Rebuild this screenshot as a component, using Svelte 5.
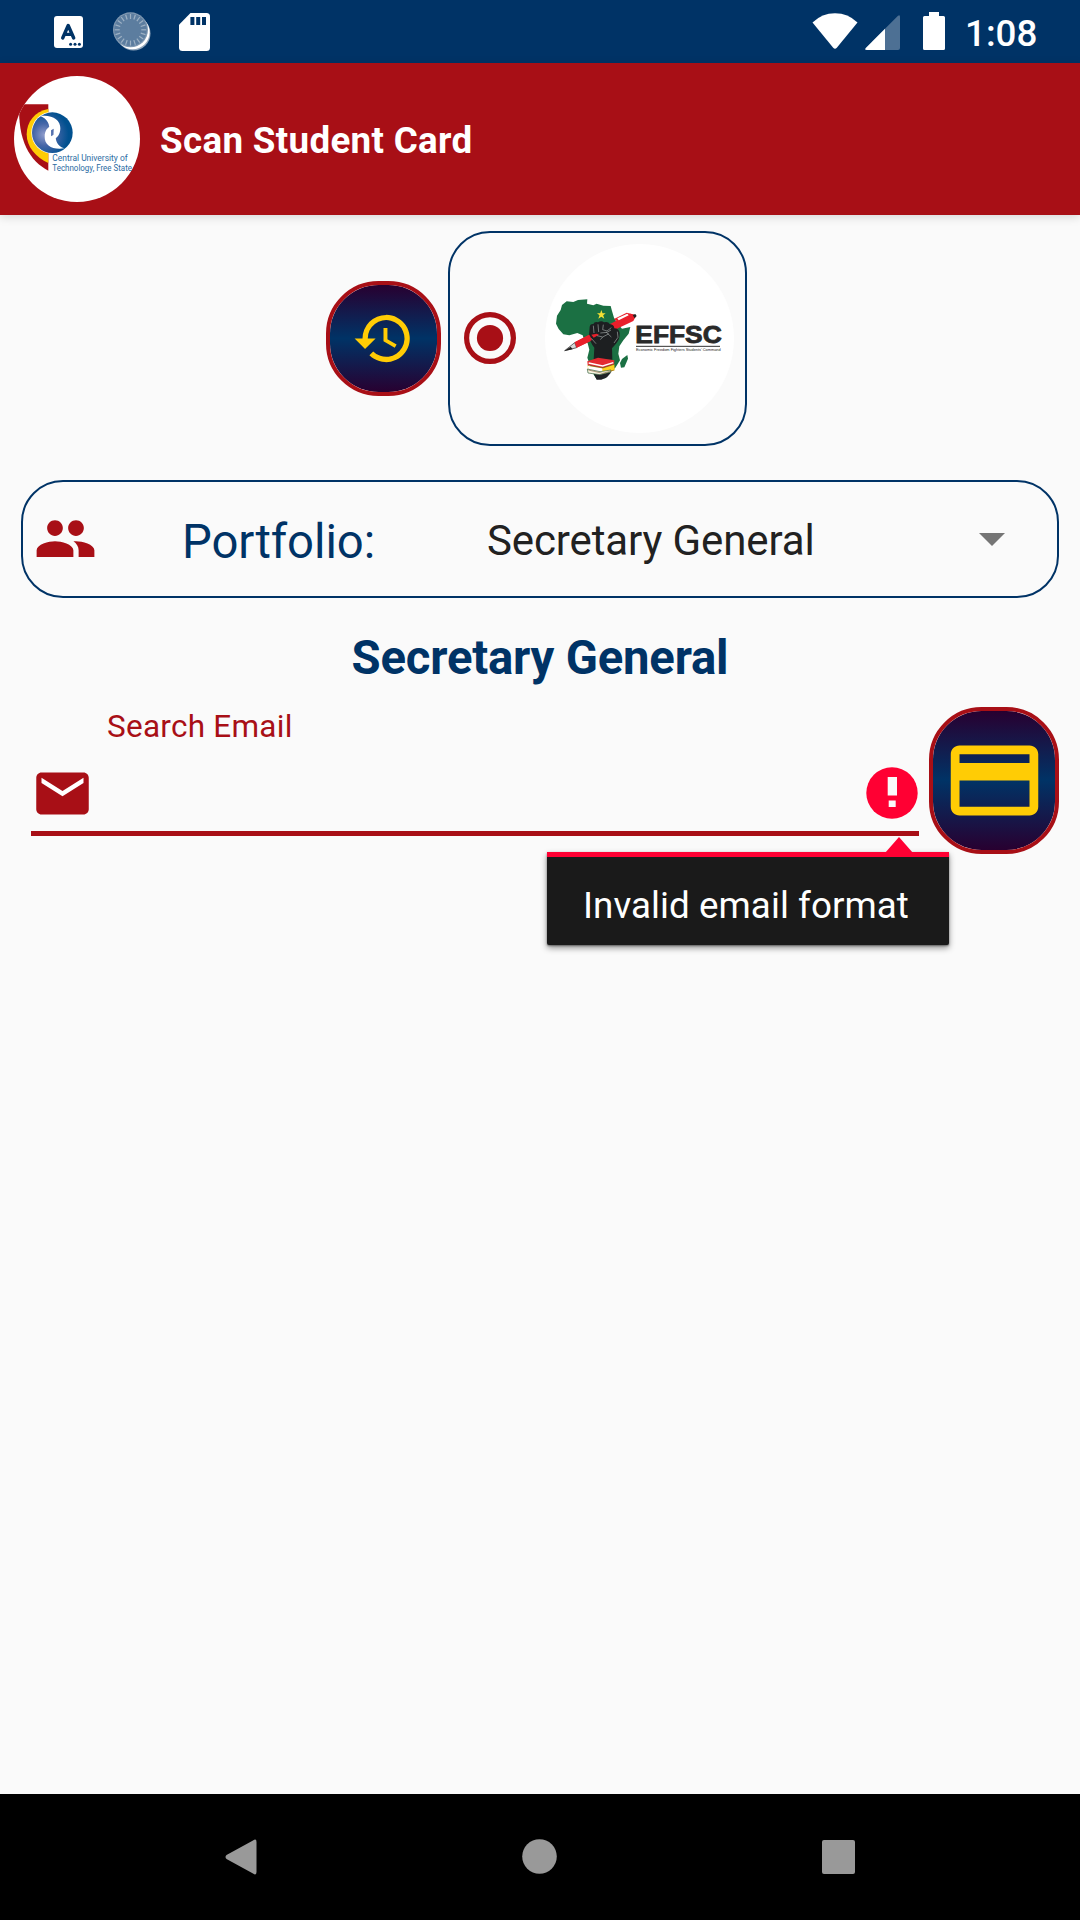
<script>
  let portfolio = $state('Secretary General');
  const spokes = Array.from({ length: 20 }, (_, i) => i * 18);
</script>

<div class="screen">
  <div class="status">
    <svg class="i-lang" width="29" height="32" viewBox="0 0 29 32">
      <rect width="29" height="32" rx="3" fill="#fff" />
      <path d="M8.7 22 14.2 9.5 19.7 22M10.8 18.4H17.6" fill="none" stroke="#003366" stroke-width="3.4" stroke-linecap="round" stroke-linejoin="round" />
      <g fill="#003366"><circle cx="16.6" cy="28.3" r="1.5" /><circle cx="21" cy="28.3" r="1.5" /><circle cx="25.4" cy="28.3" r="1.5" /></g>
    </svg>
    <svg class="i-sync" width="38" height="40" viewBox="0 0 38 40">
      <circle cx="20.5" cy="21.5" r="17" fill="#8fa5bb" />
      <circle cx="19.6" cy="20.3" r="17" fill="#fff" />
      <circle cx="17.5" cy="17.8" r="17.5" fill="#8099b2" />
      <circle cx="17.5" cy="17.8" r="16.3" fill="#5c7d9f" />
      {#each spokes as a}
        <path d="M17.5 2V7" stroke="#9db1c4" stroke-width="1.2" transform="rotate({a} 17.5 17.8)" />
      {/each}
    </svg>
    <svg class="i-sd" width="31" height="38" viewBox="0 0 31 38">
      <path d="M11.5 0H27.5Q31 0 31 3.5V34.5Q31 38 27.5 38H3.5Q0 38 0 34.5V11.8Z" fill="#fff" />
      <path d="M11.4 4h4v8h-4zM17.2 4h4v8h-4zM23 4h4v8h-4z" fill="#003366" />
    </svg>
    <div class="right">
      <svg class="i-wifi" width="46" height="37" viewBox="0 0 46 37">
        <path d="M.5 9.4Q10 .2 23 .2T45.500 9.400L24.800 34.800Q23 36.800 21.200 34.800Z" fill="#fff" />
      </svg>
      <svg class="i-cell" width="35" height="35" viewBox="0 0 35 35">
        <path d="M33 .8Q35-.8 35 2V33Q35 35 33 35H2Q-.8 35 .8 33Z" fill="#fff" fill-opacity=".3" />
        <path d="M20 13.800V35H2Q-.8 35 .8 33Z" fill="#fff" />
      </svg>
      <svg class="i-batt" width="22" height="38" viewBox="0 0 22 38">
        <path d="M6 0h10v4h4.500q1.500 0 1.500 1.500v31q0 1.500-1.500 1.500h-19q-1.500 0-1.500-1.500v-31q0-1.500 1.500-1.500h4.500z" fill="#fff" />
      </svg>
      <span class="clock">1:08</span>
    </div>
  </div>

  <header>
    <svg class="crest" viewBox="42 33 378 378">
      <defs>
        <radialGradient id="globe" cx=".3" cy=".55" r=".6">
          <stop offset="0" stop-color="#8f9ccb" />
          <stop offset=".45" stop-color="#4566a8" />
          <stop offset="1" stop-color="#00508f" />
        </radialGradient>
        <clipPath id="disc"><circle cx="231" cy="222" r="189" /></clipPath>
      </defs>
      <circle cx="231" cy="222" r="189" fill="#fff" />
      <g clip-path="url(#disc)">
        <path d="M58 118H145V317C90 290 52 225 58 118Z" fill="#a80f16" />
        <path d="M145 132C104 140 80 170 80 208S108 278 145 294Z" fill="#ffcc05" />
        <circle cx="157" cy="203" r="63" fill="#fff" />
        <circle cx="157" cy="203" r="61" fill="url(#globe)" />
        <path d="M121 153C155 148 182 164 181 190C181 209 171 219 160 224L161 191L148 199C150 178 142 161 121 153Z" fill="#fff" />
        <path d="M193 250C158 256 133 240 134 215C134 196 144 186 153 183L153 214L167 206C165 228 173 243 193 250Z" fill="#fff" />
      </g>
      <g font-family="Roboto, sans-serif" font-size="25" fill="#2b6ca3">
        <text x="157" y="288" textLength="226" lengthAdjust="spacingAndGlyphs">Central University of</text>
        <text x="157" y="318" textLength="239" lengthAdjust="spacingAndGlyphs">Technology, Free State</text>
      </g>
    </svg>
    <h1>Scan Student Card</h1>
  </header>

  <main>
    <section class="party-row">
      <button class="pill history" aria-label="History">
        <svg width="63" height="63" viewBox="0 0 24 24" fill="#ffcc05">
          <path d="M13 3a9 9 0 0 0-9 9H1l3.890 3.890.07.14L9 12H6a7 7 0 1 1 2.060 4.940l-1.420 1.420A9 9 0 1 0 13 3zm-1 5v5l4.280 2.540.720-1.210-3.500-2.080V8H12z" />
        </svg>
      </button>
      <div class="party">
        <svg class="radio" width="52" height="52" viewBox="0 0 52 52">
          <circle cx="26" cy="26" r="23.400" fill="none" stroke="#a80f16" stroke-width="5.200" />
          <circle cx="26" cy="26" r="13.100" fill="#a80f16" />
        </svg>
        <svg class="effsc" width="189" height="189" viewBox="15 27 567 567">
          <circle cx="298.500" cy="310.500" r="283.500" fill="#fff" />
          <path d="M80 199L100 201L114 195L142 193L141 206L160 211L170 206L190 212L212 213L216 228L222 248L234 268L246 281L271 276L266 296L250 316L238 334L235 356L240 376L226 398L208 414L196 430L170 433L162 421L152 396L142 368L148 344L143 325L132 313L128 301L112 294L88 301L70 298L56 282L48 266L51 242L62 225L66 210Z" fill="#1b7043" />
          <path d="M262 360L264 371L253 397L243 398L240 384L246 372Z" fill="#1b7043" />
          <path d="M161 415L214 412L201 427L184 434H170Z" fill="#202326" />
          <path d="M184 225L187.500 235L197 235L189.500 241L193 251L184 245L175 251L178.500 241L171 235L180.500 235Z" fill="#f7e034" />
          <path d="M104 322L270 236Q282 236 286 247L280 258L110 338Z" fill="#e9202b" />
          <path d="M222 252L260 233L284 239L238 264Z" fill="#e9202b" />
          <path d="M232 250L262 236L266 241L236 256Z" fill="#fff" />
          <path d="M104 323L110 338L74 347Z" fill="#d8d8d8" stroke="#222" stroke-width="2" />
          <path d="M92 335L98 343L73 348ZM278 240L286 237L290 243L284 250Z" fill="#222" />
          <path d="M149 276Q150 266 160 267Q163 259 174 262Q184 256 192 262Q205 259 209 267Q222 268 223 280Q237 280 239 294Q240 313 228 326L216 340L217 374H161L163 338Q150 322 147 302Z" fill="#1d1f21" />
          <path d="M104 322L148 299L156 315L110 338Z" fill="#e9202b" />
          <path d="M154 299L170 296L177 299L161 308Z" fill="#e9202b" />
          <path d="M160 272L162 294M174 268L176 291M190 269L188 284L201 288L214 278M181 294L201 292L213 285M171 302L188 306L207 296M188 306L181 314M198 291L214 306M154 310L168 326M232 290L234 307L222 324" fill="none" stroke="#9fa5a3" stroke-width="2" />
          <path d="M142 379L174 368L223 376L222 388L188 398L143 390Z" fill="#e42a31" />
          <path d="M146 384L188 393L220 383" fill="none" stroke="#fff" stroke-width="4" />
          <path d="M143 391L188 399L223 388L224 406L188 417L144 404Z" fill="#ffd21f" />
          <path d="M144 392L187 400V415L145 405Z" fill="#fff" />
          <path d="M142 402L180 410L213 405L212 411L180 419L144 414Z" fill="#f8f7e2" stroke="#315c3a" stroke-width="2" />
          <path d="M143 391L188 399L223 388M145 405L188 415L223 405" fill="none" stroke="#6c3e1b" stroke-width="1.500" />
          <text x="286" y="324" class="mark" textLength="259" lengthAdjust="spacingAndGlyphs">EFFSC</text>
          <path d="M288 334H540" stroke="#333" stroke-width="3" />
          <text x="288" y="349" class="sub" textLength="254" lengthAdjust="spacingAndGlyphs">Economic Freedom Fighters Students' Command</text>
        </svg>
      </div>
    </section>

    <section class="portfolio">
      <svg class="people" width="63" height="63" viewBox="0 0 24 24" fill="#a80f16">
        <path d="M16 11c1.660 0 2.990-1.340 2.990-3S17.660 5 16 5c-1.660 0-3 1.340-3 3s1.340 3 3 3zm-8 0c1.660 0 2.990-1.340 2.990-3S9.660 5 8 5C6.340 5 5 6.340 5 8s1.340 3 3 3zm0 2c-2.330 0-7 1.170-7 3.500V19h14v-2.500c0-2.330-4.670-3.500-7-3.500zm8 0c-.29 0-.62.020-.97.050 1.160.840 1.970 1.970 1.970 3.450V19h6v-2.500c0-2.330-4.670-3.500-7-3.500z" />
      </svg>
      <span class="label">Portfolio:</span>
      <span class="value">{portfolio}</span>
      <svg class="caret" width="26" height="13" viewBox="0 0 26 13"><path d="M0 0H26L13 13Z" fill="#757575" /></svg>
    </section>

    <h2>{portfolio}</h2>

    <section class="search">
      <div class="field">
        <div class="hint">Search Email</div>
        <div class="entry">
          <svg width="63" height="63" viewBox="0 0 24 24">
            <path d="M3.500 5.500h17v7h-17z" fill="#fff" />
            <path d="M20 4H4c-1.100 0-1.990.9-1.990 2L2 18c0 1.100.9 2 2 2h16c1.100 0 2-.9 2-2V6c0-1.100-.9-2-2-2zm0 4l-8 5-8-5V6l8 5 8-5v2z" fill="#a80f16" />
          </svg>
          <svg class="error" width="52" height="52" viewBox="0 0 52 52">
            <circle cx="26" cy="26" r="25.700" fill="#ff0033" />
            <path d="M21.700 10h9.300v18.500h-9.300zM22.700 33.500h7v6.500h-7z" fill="#fafafa" />
          </svg>
        </div>
        <div class="tooltip">
          <svg class="arrow" width="28" height="16" viewBox="0 0 28 16"><path d="M14 0L28 16H0Z" fill="#ff0033" /></svg>
          Invalid email format
        </div>
      </div>
      <button class="pill card" aria-label="Scan card">
        <svg width="105" height="105" viewBox="0 0 24 24" fill="#ffcc05">
          <path d="M20 4H4c-1.110 0-1.990.89-1.990 2L2 18c0 1.110.89 2 2 2h16c1.110 0 2-.89 2-2V6c0-1.110-.89-2-2-2zm0 14H4v-6h16v6zm0-10H4V6h16v2z" />
        </svg>
      </button>
    </section>
  </main>

  <nav>
    <svg width="32" height="36" viewBox="0 0 32 36"><path d="M28 1.500Q31.500-1 31.500 3V33Q31.500 37 28 34.500L1.500 20Q-.5 18 1.500 16Z" fill="#999" /></svg>
    <svg width="36" height="36" viewBox="0 0 36 36"><circle cx="17.500" cy="17.500" r="17.300" fill="#999" /></svg>
    <svg width="33" height="34" viewBox="0 0 33 34"><rect width="33" height="34" rx="2" fill="#999" /></svg>
  </nav>
</div>

<style>
  :global(body) { margin: 0; background: #fafafa; }
  .screen {
    width: 1080px; height: 1920px; display: flex; flex-direction: column;
    font-family: Roboto, sans-serif; background: #fafafa; overflow: hidden;
  }
  svg { display: block; flex: none; }

  .status { height: 63px; flex: none; display: flex; align-items: flex-start; background: #003366; box-sizing: border-box; padding: 12px 42px 0 54px; }
  .i-lang { margin-top: 4px; }
  .i-sync { margin-left: 30px; }
  .i-sd { margin: .5px 0 0 28px; }
  .right { margin-left: auto; display: flex; align-items: flex-start; }
  .i-wifi { margin-top: 1px; }
  .i-cell { margin: 3px 0 0 7px; }
  .i-batt { margin-left: 23px; }
  .clock { margin-left: 20px; margin-top: 2px; width: 73px; font-size: 36.75px; line-height: 40px; font-weight: 500; color: #fff; white-space: nowrap; }

  header {
    height: 152px; flex: none; display: flex; align-items: center; padding-left: 14px; background: #a80f16;
    box-shadow: 0 2px 9px rgba(0, 0, 0, .15); position: relative;
  }
  .crest { width: 126px; height: 126px; }
  h1 { margin: 3px 0 0 20px; font-size: 36.75px; line-height: 44px; font-weight: 700; letter-spacing: .32px; color: #fff; white-space: nowrap; }

  main { flex: 1; padding: 16px 21px 0; }
  .pill {
    display: grid; place-content: center; box-sizing: border-box; padding: 0; flex: none;
    border: 4px solid #a80f16; border-radius: 52.500px;
    background: linear-gradient(#280030, #003366 50%, #280030) padding-box;
  }
  .party-row { display: flex; align-items: center; gap: 7px; padding-left: 305px; }
  .history { width: 115px; height: 115px; }
  .party {
    width: 299px; height: 215px; box-sizing: border-box; border: 2px solid #003366; border-radius: 42px;
    display: flex; align-items: center; padding-left: 14px;
  }
  .radio { margin-bottom: 1px; }
  .effsc { margin-left: 29px; }
  .mark { font: 700 72px "Liberation Sans", sans-serif; fill: #292929; stroke: #292929; stroke-width: 2.500px; }
  .sub { font: 12px "Liberation Sans", sans-serif; fill: #222; }

  .portfolio {
    display: flex; align-items: center; box-sizing: border-box; width: 1038px; height: 118px; margin-top: 34px;
    border: 2px solid #003366; border-radius: 42px; padding-left: 11px;
  }
  .people { margin-bottom: 2px; }
  .label { width: 305px; margin: 5px 0 0 85px; font-size: 47.250px; line-height: 56px; letter-spacing: -.08px; color: #003366; }
  .value { width: 491.500px; margin-top: 4px; font-size: 42px; line-height: 50px; letter-spacing: -.12px; color: #212121; }

  h2 { margin: 32px 0 0; font-size: 47.250px; line-height: 56px; font-weight: 700; letter-spacing: -.2px; color: #003366; text-align: center; }

  .search { display: flex; gap: 10px; margin-top: 21px; padding-left: 10px; }
  .field { width: 888px; height: 129px; position: relative; box-sizing: border-box; border-bottom: 5px solid #a80f16; }
  .hint { padding: 1px 0 0 76px; height: 38px; line-height: 38px; font-size: 31.500px; letter-spacing: .25px; color: #a80f16; }
  .entry { display: flex; align-items: center; justify-content: space-between; margin-top: 15.500px; padding-right: 1px; }
  .tooltip {
    position: absolute; left: 515.500px; top: 145px; width: 402px; height: 93px; box-sizing: border-box;
    padding-left: 36.500px; border-top: 5px solid #ff0033; border-radius: 0 0 2px 2px; background: #1a1a1a;
    font-size: 36.750px; line-height: 97px; letter-spacing: .06px; color: #fff; white-space: nowrap;
    box-shadow: 0 3px 6px rgba(0, 0, 0, .42), 0 1px 2px rgba(0, 0, 0, .4);
  }
  .arrow { position: absolute; right: 36px; top: -20.500px; }
  .card { width: 130px; height: 147px; }

  nav { height: 126px; flex: none; background: #000; display: flex; align-items: center; justify-content: space-between; padding: 0 225px; box-sizing: border-box; }
</style>
